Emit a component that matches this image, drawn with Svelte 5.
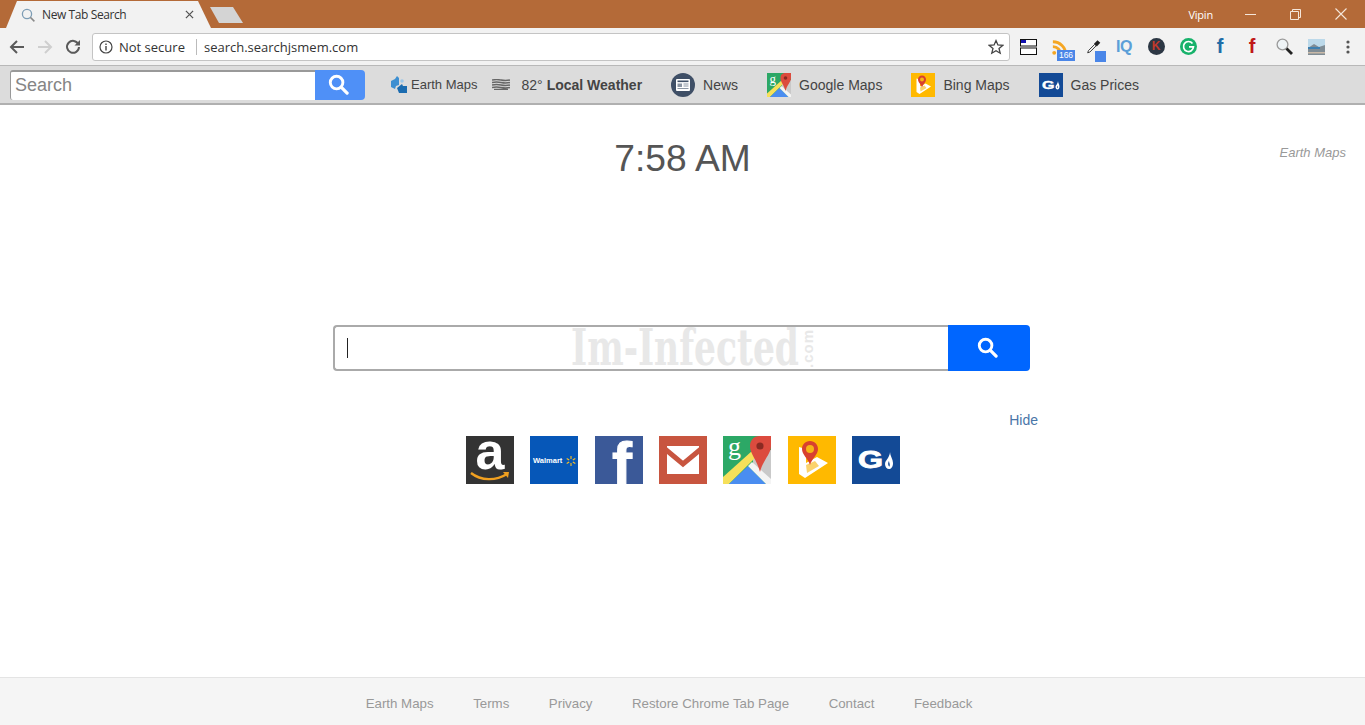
<script>
  const bookmarks = [
    { label: 'News', icon: 'news' },
    { label: 'Google Maps', icon: 'gmaps' },
    { label: 'Bing Maps', icon: 'bing' },
    { label: 'Gas Prices', icon: 'gas' }
  ];
  const footerLinks = ['Earth Maps', 'Terms', 'Privacy', 'Restore Chrome Tab Page', 'Contact', 'Feedback'];
</script>

{#snippet gmaps()}
  <svg viewBox="0 0 48 48" class="tile-svg">
    <rect width="48" height="48" fill="#2ca866" />
    <polygon points="30,14 48,14 48,48 30,30" fill="#c9c9c9" />
    <polygon points="0,41 29,15 34,20 6,48 0,48" fill="#f6e05a" />
    <polygon points="6,48 25,30 43,48" fill="#4a8df0" />
    <polygon points="25,30 29,26 48,43 48,48 43,48" fill="#f4f4f4" />
    <path d="M37 0 C30 0 27 5 27 10 C27 18 34 24 37 36 C40 24 48 18 48 10 L48 0 Z" fill="#dc4b3e" />
    <circle cx="37" cy="10" r="3.6" fill="#8a2a22" />
    <text x="5" y="19" class="g-letter">g</text>
  </svg>
{/snippet}

{#snippet bing()}
  <svg viewBox="0 0 48 48" class="tile-svg">
    <rect width="48" height="48" fill="#ffb900" />
    <polygon points="11,11 18,13 18,27 29,21 40,27 17,42 11,38" fill="#fff" />
    <polygon points="18,29 27,25 31,30 19,37" fill="#fbd36b" />
    <path d="M22 5 C17 5 14 9 14 13 C14 19 20 22 22 29 C24 22 30 19 30 13 C30 9 27 5 22 5 Z" fill="#d8402f" />
    <circle cx="22" cy="13" r="4" fill="#f5b417" />
  </svg>
{/snippet}

{#snippet gas()}
  <svg viewBox="0 0 48 48" class="tile-svg">
    <rect width="48" height="48" fill="#134a96" />
    <text x="6" y="32" textLength="25" lengthAdjust="spacingAndGlyphs" class="gas-letter">G</text>
    <path d="M38 16 C38 20 41 23 41 27 C41 31 39 33 37 33 C35 33 33 31 33 28 C33 25 35 24 36 22 C37 20 38 18 38 16 Z" fill="#fff" />
    <path d="M37 25 C37 27 38.4 28 37.6 30.5 C36 30 35.6 27 37 25 Z" fill="#134a96" />
  </svg>
{/snippet}

{#snippet news()}
  <svg viewBox="0 0 24 24" class="tile-svg">
    <circle cx="12" cy="12" r="12" fill="#3f4f66" />
    <rect x="5" y="6" width="14" height="12" rx="1" fill="#fff" />
    <rect x="6.5" y="7.5" width="11" height="1.6" fill="#3f4f66" />
    <rect x="6.5" y="10.5" width="4.5" height="3.5" fill="#8b95a3" />
    <rect x="12.5" y="10.5" width="5" height="1" fill="#8b95a3" />
    <rect x="12.5" y="12.5" width="5" height="1" fill="#8b95a3" />
    <rect x="6.5" y="15" width="11" height="1" fill="#8b95a3" />
  </svg>
{/snippet}

{#snippet searchGlass(color)}
  <svg viewBox="0 0 22 22" class="tile-svg">
    <circle cx="9" cy="9" r="6.6" fill="none" stroke={color} stroke-width="3" />
    <path d="M13.8 13.8 L20 20" stroke={color} stroke-width="3.4" stroke-linecap="round" />
  </svg>
{/snippet}

<div class="page">
  <div class="titlebar">
    <div class="tab">
      <svg class="favicon" viewBox="0 0 14 14">
        <circle cx="6" cy="6" r="4.6" fill="none" stroke="#7d9db5" stroke-width="1.3" />
        <path d="M9.4 9.4 L13.4 13.4" stroke="#8a8a8a" stroke-width="1.5" />
      </svg>
      <span class="tab-title">New Tab Search</span>
      <svg class="tab-close" viewBox="0 0 10 10">
        <path d="M1 1 L9 9 M9 1 L1 9" stroke="#555" stroke-width="1.4" />
      </svg>
    </div>
    <div class="newtab"></div>
    <span class="user">Vipin</span>
    <div class="winbtn">
      <svg width="11" height="11" viewBox="0 0 11 11"><path d="M0 5.5 H11" stroke="#f5e6da" /></svg>
    </div>
    <div class="winbtn">
      <svg width="11" height="11" viewBox="0 0 11 11">
        <path d="M.5 2.5 H8.5 V10.5 H.5 Z M2.5 2.5 V.5 H10.5 V8.5 H8.5" fill="none" stroke="#f5e6da" />
      </svg>
    </div>
    <div class="winbtn">
      <svg width="12" height="12" viewBox="0 0 12 12"><path d="M.5 .5 L11.5 11.5 M11.5 .5 L.5 11.5" stroke="#f5e6da" stroke-width="1.1" /></svg>
    </div>
  </div>

  <div class="toolbar">
    <div class="navbtn">
      <svg width="16" height="16" viewBox="0 0 16 16"><path d="M15 8 H2 M8 2 L2 8 L8 14" fill="none" stroke="#5a5a5a" stroke-width="2" /></svg>
    </div>
    <div class="navbtn">
      <svg width="16" height="16" viewBox="0 0 16 16"><path d="M1 8 H14 M8 2 L14 8 L8 14" fill="none" stroke="#cfcfcf" stroke-width="2" /></svg>
    </div>
    <div class="navbtn">
      <svg width="16" height="16" viewBox="0 0 16 16">
        <path d="M13.4 5.2 A6 6 0 1 0 14 8" fill="none" stroke="#5a5a5a" stroke-width="2" />
        <path d="M9.5 6.5 H15 V1 Z" fill="#5a5a5a" />
      </svg>
    </div>
    <div class="omnibox">
      <svg class="info" viewBox="0 0 14 14">
        <circle cx="7" cy="7" r="6" fill="none" stroke="#444" stroke-width="1.2" />
        <rect x="6.3" y="6" width="1.4" height="4.5" fill="#444" />
        <rect x="6.3" y="3.5" width="1.4" height="1.5" fill="#444" />
      </svg>
      <span class="secure">Not secure</span>
      <span class="divider"></span>
      <span class="url">search.searchjsmem.com</span>
      <svg class="star" viewBox="0 0 16 16">
        <path d="M8 1.6 L9.9 6 L14.7 6.4 L11 9.5 L12.2 14.2 L8 11.7 L3.8 14.2 L5 9.5 L1.3 6.4 L6.1 6 Z" fill="none" stroke="#444" stroke-width="1.3" />
      </svg>
    </div>
    <div class="exts">
      <div class="ext">
        <svg width="17" height="16" viewBox="0 0 17 16">
          <rect x=".5" y=".5" width="16" height="6.5" fill="#fff" stroke="#111" />
          <rect x="1" y="1" width="5" height="3" fill="#1010b0" />
          <rect x=".5" y="9" width="16" height="6.5" fill="#fff" stroke="#111" />
        </svg>
      </div>
      <div class="ext">
        <div class="rss">
          <svg class="rss-arc" width="16" height="17" viewBox="0 0 18 18">
            <circle cx="2.5" cy="15" r="2.2" fill="#f5a623" />
            <path d="M1 8 A9 9 0 0 1 10 17 M1 2.5 A14.5 14.5 0 0 1 15.5 17" fill="none" stroke="#f5a623" stroke-width="3.2" />
          </svg>
          <span class="badge">166</span>
        </div>
      </div>
      <div class="ext">
        <div class="picker">
          <svg class="dropper" width="14" height="15" viewBox="0 0 20 20">
            <path d="M1 19 L2 16 L11 7 L13 9 L4 18 Z" fill="#fff" stroke="#333" stroke-width="1.4" />
            <path d="M10 6 L15 1 L19 4.5 L14 10 Z" fill="#222" />
          </svg>
          <span class="swatch"></span>
        </div>
      </div>
      <div class="ext"><span class="iq">IQ</span></div>
      <div class="ext"><span class="circle k">K</span></div>
      <div class="ext">
        <svg width="17" height="17" viewBox="0 0 17 17">
          <circle cx="8.5" cy="8.5" r="8.5" fill="#17b26b" />
          <path d="M12.5 5.5 A5 5 0 1 0 13.5 8.8 H9" fill="none" stroke="#fff" stroke-width="1.7" />
        </svg>
      </div>
      <div class="ext"><span class="fb blue">f</span></div>
      <div class="ext"><span class="fb red">f</span></div>
      <div class="ext">
        <svg width="17" height="17" viewBox="0 0 17 17">
          <circle cx="6.5" cy="6.5" r="5.4" fill="#eef3f6" stroke="#9a9a9a" stroke-width="1.3" />
          <path d="M10.5 10.5 L16 16" stroke="#222" stroke-width="2.8" />
        </svg>
      </div>
      <div class="ext">
        <svg width="17" height="16" viewBox="0 0 17 16">
          <rect width="17" height="16" fill="#bcd9ea" />
          <polygon points="0,9 6,5 11,8 17,6 17,16 0,16" fill="#7f8c95" />
          <rect y="8" width="12" height="2" fill="#3d7fb0" />
          <rect y="13" width="17" height="1.5" fill="#c9b9a8" />
        </svg>
      </div>
      <div class="ext">
        <svg width="4" height="14" viewBox="0 0 4 14">
          <circle cx="2" cy="2" r="1.6" fill="#555" />
          <circle cx="2" cy="7" r="1.6" fill="#555" />
          <circle cx="2" cy="12" r="1.6" fill="#555" />
        </svg>
      </div>
    </div>
  </div>

  <div class="bookmarks">
    <div class="bar-search">
      <div class="bar-input">Search</div>
      <div class="bar-btn"><span class="glass-bar">{@render searchGlass('#fff')}</span></div>
    </div>
    <div class="bm earth">
      <svg width="17" height="17" viewBox="0 0 17 17">
        <path d="M1 5 L5 3 L7 0 L9 2 L9 9 L6 10 L5 13 L1 11 Z" fill="#3d8fd1" />
        <path d="M7 12 L12 8 L13 10 L17 10 L17 17 L9 17 Z" fill="#1b6cb0" />
        <circle cx="12" cy="5" r="1.8" fill="#9cc7e8" />
      </svg>
      <span>Earth Maps</span>
    </div>
    <div class="bm weather">
      <svg width="18" height="11" viewBox="0 0 18 11">
        <path d="M0 1 Q4.5 0 9 1 T18 1 M0 3.5 Q4.5 2.5 9 3.5 T18 3.5 M0 6 Q4.5 5 9 6 T18 6 M0 8.5 Q4.5 7.5 9 8.5 T18 8.5 M2 10.5 H16" fill="none" stroke="#666" stroke-width="1.3" />
      </svg>
      <span class="temp">82°</span>
      <b>Local Weather</b>
    </div>
    {#each bookmarks as b}
      <div class="bm item">
        <span class="bm-icon">
          {#if b.icon === 'news'}
            {@render news()}
          {:else if b.icon === 'gmaps'}
            {@render gmaps()}
          {:else if b.icon === 'bing'}
            {@render bing()}
          {:else}
            {@render gas()}
          {/if}
        </span>
        <span>{b.label}</span>
      </div>
    {/each}
  </div>

  <main>
    <div class="clock-row">
      <span></span>
      <div class="clock">7:58 AM</div>
      <a class="earth-link" href="#top">Earth Maps</a>
    </div>

    <div class="center">
      <div class="search">
        <div class="search-field">
          <span class="caret"></span>
          <div class="watermark">
            <span class="wm-text">Im-Infected</span>
            <span class="wm-com">.com</span>
          </div>
        </div>
        <div class="search-btn"><span class="glass-main">{@render searchGlass('#fff')}</span></div>
      </div>
      <a class="hide" href="#top">Hide</a>
      <div class="tiles">
        <div class="tile">
          <svg viewBox="0 0 48 48" class="tile-svg">
            <rect width="48" height="48" fill="#333" />
            <text x="24" y="33" text-anchor="middle" class="amz">a</text>
            <path d="M5 37 C15 45 30 45 41 38" fill="none" stroke="#f0a020" stroke-width="2.4" />
            <path d="M37 36 L43 36 L42 42 Z" fill="#f0a020" />
          </svg>
        </div>
        <div class="tile">
          <svg viewBox="0 0 48 48" class="tile-svg">
            <rect width="48" height="48" fill="#0657b8" />
            <text x="3" y="26.5" class="wm">Walmart</text>
            <path d="M41 20 V23 M41 27 V30 M36.7 22.5 L39.2 24 M42.8 26 L45.3 27.5 M36.7 27.5 L39.2 26 M42.8 24 L45.3 22.5" stroke="#ffc220" stroke-width="1.1" />
          </svg>
        </div>
        <div class="tile">
          <svg viewBox="0 0 48 48" class="tile-svg">
            <rect width="48" height="48" fill="#3b5998" />
            <text x="17" y="48" class="fbk">f</text>
          </svg>
        </div>
        <div class="tile">
          <svg viewBox="0 0 48 48" class="tile-svg">
            <rect width="48" height="48" fill="#c8553f" />
            <rect x="8" y="10" width="32" height="28" fill="#fff" />
            <path d="M6 13 L24 28 L42 13" fill="none" stroke="#c8553f" stroke-width="5" />
          </svg>
        </div>
        <div class="tile">{@render gmaps()}</div>
        <div class="tile">{@render bing()}</div>
        <div class="tile">{@render gas()}</div>
      </div>
    </div>
  </main>

  <footer>
    {#each footerLinks as link}
      <a href="#top">{link}</a>
    {/each}
  </footer>
</div>

<style>
  :global(body) {
    margin: 0;
    background: #fff;
  }

  .page {
    height: 725px;
    display: flex;
    flex-direction: column;
    overflow: hidden;
    font-family: "Liberation Sans", Arial, sans-serif;
  }

  /* window title bar */
  .titlebar {
    height: 28px;
    background: #b46a38;
    display: flex;
    align-items: flex-end;
    padding-right: 2px;
    flex-shrink: 0;
  }

  .tab {
    width: 205px;
    height: 27px;
    margin-left: 6px;
    background: #f2f2f2;
    clip-path: polygon(0 100%, 11px 0, 192px 0, 205px 100%);
    display: flex;
    align-items: center;
    font-family: "Open Sans", sans-serif;
    font-size: 12px;
    color: #333;
  }

  .favicon {
    width: 14px;
    height: 14px;
    margin-left: 15px;
  }

  .tab-title {
    margin-left: 7px;
    width: 143px;
    letter-spacing: -0.4px;
  }

  .tab-close {
    width: 9px;
    height: 9px;
  }

  .newtab {
    width: 33px;
    height: 16px;
    margin: 0 0 5px -1px;
    background: #d4d4d4;
    clip-path: polygon(0 0, 23px 0, 33px 100%, 9px 100%);
  }

  .user {
    margin-left: auto;
    align-self: center;
    font-family: "Open Sans", sans-serif;
    font-size: 11px;
    color: #fff;
    letter-spacing: -0.2px;
    margin-right: 15px;
  }

  .winbtn {
    width: 45px;
    height: 28px;
    display: flex;
    align-items: center;
    justify-content: center;
  }

  /* address bar row */
  .toolbar {
    height: 37px;
    background: #f2f2f2;
    border-bottom: 1px solid #b8b8b8;
    display: flex;
    align-items: center;
    padding-left: 3px;
    padding-right: 1px;
    flex-shrink: 0;
  }

  .navbtn {
    width: 28px;
    display: flex;
    justify-content: center;
  }

  .omnibox {
    width: 916px;
    height: 26px;
    margin-left: 5px;
    background: #fff;
    border: 1px solid #c4c4c4;
    border-radius: 3px;
    display: flex;
    align-items: center;
    font-family: "Open Sans", sans-serif;
    font-size: 13px;
    color: #333;
  }

  .info {
    width: 14px;
    height: 14px;
    margin-left: 6px;
  }

  .secure {
    margin-left: 6px;
  }

  .divider {
    width: 1px;
    height: 16px;
    background: #bbb;
    margin: 0 7px 0 11px;
  }

  .url {
    flex: 1;
  }

  .star {
    width: 16px;
    height: 16px;
    margin-right: 5px;
  }

  .exts {
    margin-left: 2px;
    display: flex;
  }

  .ext {
    width: 32px;
    height: 28px;
    display: flex;
    align-items: center;
    justify-content: center;
  }

  .rss,
  .picker {
    position: relative;
    width: 22px;
    height: 24px;
    display: flex;
    align-items: flex-start;
  }

  .rss {
    margin-left: 6px;
  }

  .rss-arc {
    margin-top: 4px;
  }

  .dropper {
    margin: 4px 0 0 6px;
  }

  .badge {
    position: absolute;
    right: -1px;
    bottom: -2px;
    width: 18px;
    height: 11px;
    background: #4a86e8;
    color: #fff;
    font-size: 8.5px;
    line-height: 11px;
    text-align: center;
  }

  .swatch {
    position: absolute;
    right: -3px;
    bottom: -3px;
    width: 11px;
    height: 11px;
    background: #4a86e8;
  }

  .iq {
    font-size: 16px;
    font-weight: bold;
    letter-spacing: -0.5px;
    color: #5b9fd8;
  }

  .circle {
    width: 17px;
    height: 17px;
    border-radius: 50%;
    text-align: center;
    line-height: 17px;
    font-size: 12px;
    font-weight: bold;
  }

  .k {
    background: #2c3744;
    color: #c0392b;
  }

  .fb {
    font-size: 20px;
    font-weight: bold;
  }

  .blue {
    color: #1f6da8;
  }

  .red {
    color: #c01818;
  }

  /* bookmarks bar */
  .bookmarks {
    height: 37px;
    background: #dcdcdc;
    border-bottom: 2px solid #b0b0b0;
    display: flex;
    align-items: center;
    font-size: 14px;
    color: #444;
    flex-shrink: 0;
  }

  .bar-search {
    display: flex;
    margin-left: 10px;
    height: 30px;
  }

  .bar-input {
    width: 300px;
    height: 28px;
    padding-left: 4px;
    background: #fff;
    border-top: 2px solid #999;
    border-left: 1px solid #999;
    border-radius: 3px 0 0 3px;
    font-size: 18px;
    line-height: 27px;
    color: #858585;
  }

  .bar-btn {
    width: 50px;
    background: #4f90f7;
    border-radius: 0 4px 4px 0;
    display: flex;
    align-items: center;
    justify-content: center;
  }

  .glass-bar {
    width: 21px;
    height: 21px;
    margin-left: -3px;
    display: block;
  }

  .glass-main {
    width: 21px;
    height: 21px;
    margin: -2px 0 0 -4px;
    display: block;
  }

  .tile-svg {
    display: block;
    width: 100%;
    height: 100%;
  }

  .bm {
    display: flex;
    align-items: center;
  }

  .earth {
    margin-left: 25px;
    gap: 4px;
    font-size: 13px;
  }

  .weather {
    margin-left: 15px;
  }

  .temp {
    margin: 0 4px 0 11px;
  }

  .item {
    margin-left: 29px;
  }

  .bm-icon {
    width: 24px;
    height: 24px;
    margin-right: 8px;
  }

  /* page body */
  main {
    flex: 1;
    display: flex;
    flex-direction: column;
  }

  .clock-row {
    display: grid;
    grid-template-columns: 1fr auto 1fr;
    padding-top: 32px;
  }

  .clock {
    font-size: 37.2px;
    line-height: 42px;
    color: #555;
  }

  .earth-link {
    justify-self: end;
    margin: 8px 19px 0 0;
    font-size: 13px;
    font-style: italic;
    color: #999;
    text-decoration: none;
  }

  .center {
    width: 711px;
    margin: 146px auto 0;
    display: flex;
    flex-direction: column;
  }

  .search {
    margin-left: 6px;
    width: 697px;
    height: 46px;
    display: flex;
  }

  .search-field {
    position: relative;
    flex: 1;
    border: 2px solid #aaa;
    border-right: 0;
    border-radius: 4px 0 0 4px;
    display: flex;
    align-items: center;
    background: #fff;
  }

  .caret {
    width: 1px;
    height: 20px;
    margin-left: 12px;
    background: #222;
  }

  .watermark {
    position: absolute;
    left: 236px;
    top: -1px;
    display: flex;
    align-items: center;
    pointer-events: none;
  }

  .wm-text {
    font-family: "DejaVu Serif", serif;
    font-weight: bold;
    font-size: 34.5px;
    line-height: 44px;
    color: #e8e8e8;
    transform: scaleY(1.45);
  }

  .wm-com {
    font-size: 15px;
    color: #e8e8e8;
    transform: rotate(-90deg);
    margin-left: -11px;
    letter-spacing: 1px;
    font-weight: bold;
  }

  .search-btn {
    width: 82px;
    background: #0066ff;
    border-radius: 0 4px 4px 0;
    display: flex;
    align-items: center;
    justify-content: center;
  }

  .hide {
    align-self: flex-end;
    margin-top: 41px;
    font-size: 14px;
    line-height: 16px;
    color: #4a76a8;
    text-decoration: none;
  }

  .tiles {
    width: 434px;
    margin: 8px 0 0 139px;
    display: flex;
    justify-content: space-between;
  }

  .tile {
    width: 48px;
    height: 48px;
  }

  .g-letter {
    font-family: "Liberation Serif", serif;
    font-size: 26px;
    fill: #fff;
  }

  .gas-letter {
    font-family: "Liberation Sans", sans-serif;
    font-weight: bold;
    font-size: 23px;
    fill: #fff;
    stroke: #fff;
    stroke-width: 0.8;
  }

  .amz {
    font-family: "Liberation Sans", sans-serif;
    font-weight: bold;
    font-size: 52px;
    fill: #fff;
  }

  .wm {
    font-family: "Liberation Sans", sans-serif;
    font-weight: bold;
    font-size: 7.5px;
    fill: #fff;
  }

  .fbk {
    font-family: "Liberation Sans", sans-serif;
    font-weight: bold;
    font-size: 60px;
    fill: #fff;
    stroke: #fff;
    stroke-width: 1;
  }

  footer {
    height: 48px;
    background: #f5f5f5;
    border-top: 1px solid #e4e4e4;
    display: flex;
    justify-content: center;
    align-items: center;
    gap: 39.5px;
    padding: 3px 27px 0 0;
    box-sizing: border-box;
    flex-shrink: 0;
  }

  footer a {
    font-size: 13.3px;
    color: #999;
    text-decoration: none;
  }
</style>
